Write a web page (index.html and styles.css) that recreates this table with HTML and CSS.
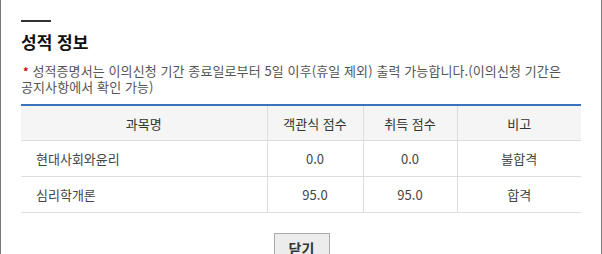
FILE: index.html
```html
<!DOCTYPE html>
<html lang="ko">
<head>
<meta charset="utf-8">
<link rel="stylesheet" href="styles.css">
</head>
<body>
<div class="frame">
  <div class="bar"></div>
  <h2 class="title">성적 정보</h2>
  <p class="notice"><span class="star">*</span> 성적증명서는 이의신청 기간 종료일로부터 5일 이후(휴일 제외) 출력 가능합니다.(이의신청 기간은 공지사항에서 확인 가능)</p>
  <table class="grades">
    <colgroup>
      <col class="c1"><col class="c2"><col class="c3"><col class="c4">
    </colgroup>
    <thead>
      <tr><th>과목명</th><th>객관식 점수</th><th>취득 점수</th><th>비고</th></tr>
    </thead>
    <tbody>
      <tr><td class="name">현대사회와윤리</td><td>0.0</td><td>0.0</td><td>불합격</td></tr>
      <tr><td class="name">심리학개론</td><td>95.0</td><td>95.0</td><td>합격</td></tr>
    </tbody>
  </table>
  <div class="actions"><button class="btn">닫기</button></div>
</div>
</body>
</html>
```

FILE: styles.css
```css
html, body {
  margin: 0;
  padding: 0;
  background: #fff;
}
body {
  font-family: "Noto Sans CJK KR", "Noto Sans", sans-serif;
  color: #333;
  height: 254px;
  overflow: hidden;
}
.frame {
  width: 602px;
  height: 254px;
  padding: 20px 21px 0 20px;
  border-left: 1px solid #7a7a7a;
  border-right: 1px solid #7a7a7a;
  box-sizing: border-box;
}
.bar {
  width: 30px;
  height: 2px;
  background: #333;
}
.title {
  margin: 8px 0 0 0;
  font-size: 17px;
  font-weight: bold;
  line-height: 24px;
  color: #111;
}
.notice {
  margin: 9px 0 0 0;
  width: 550px;
  font-size: 13px;
  line-height: 16px;
  color: #555;
  letter-spacing: 0.1px;
}
.star {
  color: #d0021b;
  font-weight: bold;
  font-size: 11px;
  margin-left: 2px;
}
.grades {
  width: 560px;
  margin-top: 9px;
  border-collapse: collapse;
  border-top: 2px solid #3a72bd;
  font-size: 13px;
  table-layout: fixed;
}
.c1 { width: 246px; }
.c2 { width: 96px; }
.c3 { width: 94px; }
.c4 { width: 124px; }
.grades th {
  background: #f5f5f5;
  height: 34px;
  padding: 0;
  font-weight: normal;
  color: #333;
  border-bottom: 1px solid #ddd;
  border-left: 1px solid #ddd;
}
.grades td {
  height: 35px;
  padding: 0;
  text-align: center;
  color: #444;
  border-bottom: 1px solid #ddd;
  border-left: 1px solid #ddd;
}
.grades th:first-child, .grades td:first-child {
  border-left: none;
}
.grades td.name {
  text-align: left;
  padding-left: 15px;
}
.actions {
  display: flex;
  justify-content: center;
  margin-top: 20px;
}
.btn {
  width: 56px;
  height: 30px;
  margin-left: 2px;
  font-family: inherit;
  font-size: 14px;
  font-weight: bold;
  color: #333;
  background: #ececec;
  border: 1px solid #aaa;
  padding: 0;
}
```
